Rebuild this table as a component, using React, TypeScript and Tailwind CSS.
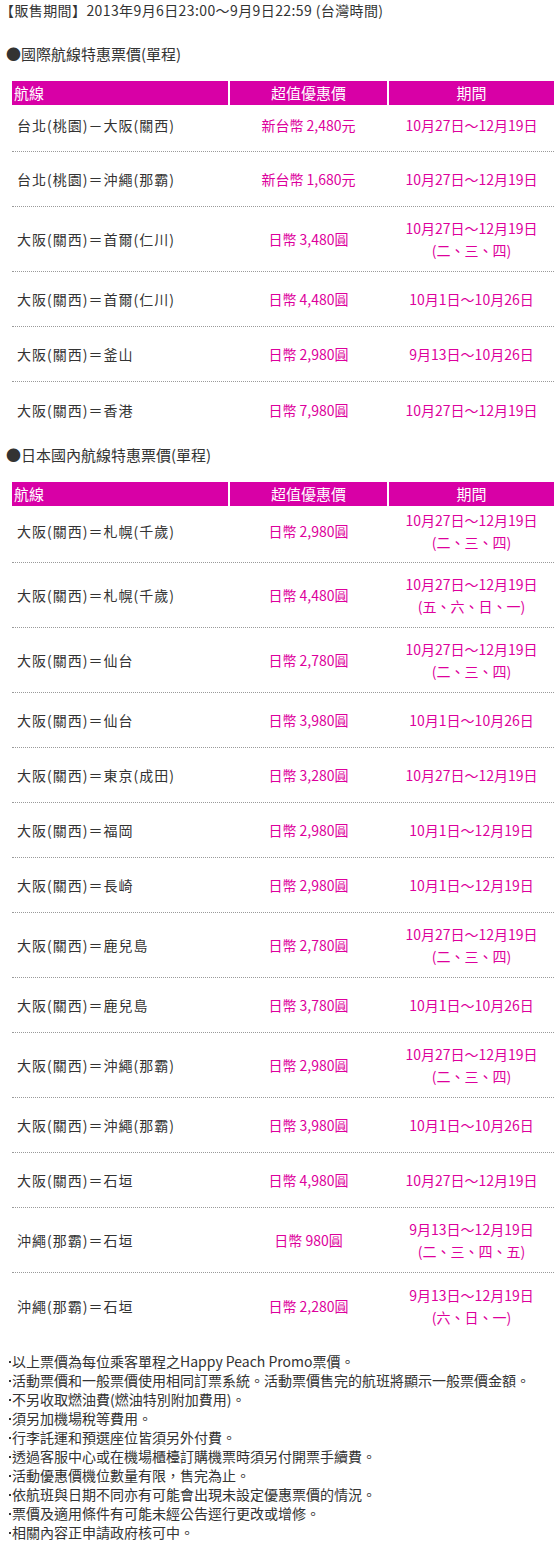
import React from "react";

type Row = {
  route: string;
  price: string;
  period: string;
  days?: string;
};

const intlRows: Row[] = [
  { route: "台北(桃園)－大阪(關西)", price: "新台幣 2,480元", period: "10月27日～12月19日" },
  { route: "台北(桃園)＝沖繩(那霸)", price: "新台幣 1,680元", period: "10月27日～12月19日" },
  { route: "大阪(關西)＝首爾(仁川)", price: "日幣 3,480圓", period: "10月27日～12月19日", days: "(二、三、四)" },
  { route: "大阪(關西)＝首爾(仁川)", price: "日幣 4,480圓", period: "10月1日～10月26日" },
  { route: "大阪(關西)＝釜山", price: "日幣 2,980圓", period: "9月13日～10月26日" },
  { route: "大阪(關西)＝香港", price: "日幣 7,980圓", period: "10月27日～12月19日" },
];

const domesticRows: Row[] = [
  { route: "大阪(關西)＝札幌(千歲)", price: "日幣 2,980圓", period: "10月27日～12月19日", days: "(二、三、四)" },
  { route: "大阪(關西)＝札幌(千歲)", price: "日幣 4,480圓", period: "10月27日～12月19日", days: "(五、六、日、一)" },
  { route: "大阪(關西)＝仙台", price: "日幣 2,780圓", period: "10月27日～12月19日", days: "(二、三、四)" },
  { route: "大阪(關西)＝仙台", price: "日幣 3,980圓", period: "10月1日～10月26日" },
  { route: "大阪(關西)＝東京(成田)", price: "日幣 3,280圓", period: "10月27日～12月19日" },
  { route: "大阪(關西)＝福岡", price: "日幣 2,980圓", period: "10月1日～12月19日" },
  { route: "大阪(關西)＝長崎", price: "日幣 2,980圓", period: "10月1日～12月19日" },
  { route: "大阪(關西)＝鹿兒島", price: "日幣 2,780圓", period: "10月27日～12月19日", days: "(二、三、四)" },
  { route: "大阪(關西)＝鹿兒島", price: "日幣 3,780圓", period: "10月1日～10月26日" },
  { route: "大阪(關西)＝沖繩(那霸)", price: "日幣 2,980圓", period: "10月27日～12月19日", days: "(二、三、四)" },
  { route: "大阪(關西)＝沖繩(那霸)", price: "日幣 3,980圓", period: "10月1日～10月26日" },
  { route: "大阪(關西)＝石垣", price: "日幣 4,980圓", period: "10月27日～12月19日" },
  { route: "沖繩(那霸)＝石垣", price: "日幣 980圓", period: "9月13日～12月19日", days: "(二、三、四、五)" },
  { route: "沖繩(那霸)＝石垣", price: "日幣 2,280圓", period: "9月13日～12月19日", days: "(六、日、一)" },
];

const notes = [
  "以上票價為每位乘客單程之Happy Peach Promo票價。",
  "活動票價和一般票價使用相同訂票系統。活動票價售完的航班將顯示一般票價金額。",
  "不另收取燃油費(燃油特別附加費用)。",
  "須另加機場稅等費用。",
  "行李託運和預選座位皆須另外付費。",
  "透過客服中心或在機場櫃檯訂購機票時須另付開票手續費。",
  "活動優惠價機位數量有限，售完為止。",
  "依航班與日期不同亦有可能會出現未設定優惠票價的情況。",
  "票價及適用條件有可能未經公告逕行更改或增修。",
  "相關內容正申請政府核可中。",
];

function FareTable({ rows }: { rows: Row[] }) {
  return (
    <div className="mx-[12px] w-[542px]">
      {/* header */}
      <div className="grid h-[24px] grid-cols-[216px_157px_165px] gap-[2px] text-[15px] leading-[24px] text-white">
        <div className="bg-[#d800a6] pl-[2px]">航線</div>
        <div className="bg-[#d800a6] text-center">超值優惠價</div>
        <div className="bg-[#d800a6] text-center">期間</div>
      </div>

      {rows.map((row, i) => {
        const first = i === 0;
        const last = i === rows.length - 1;
        const height = row.days
          ? first
            ? "h-[57px] pb-[7px]"
            : "h-[65px]"
          : first
            ? "h-[47px] pb-[7px]"
            : "h-[55px]";
        return (
          <div
            key={i}
            className={`grid grid-cols-[216px_157px_165px] gap-[2px] ${height} ${
              last ? "" : "border-b border-dotted border-[#9a9a9a]"
            }`}
          >
            <div className="flex items-center pl-[5px] tracking-[1px]">{row.route}</div>
            <div className="flex items-center justify-center text-[#dd009c]">{row.price}</div>
            <div className="flex flex-col items-center justify-center leading-[22px] text-[#dd009c]">
              <span>{row.period}</span>
              {row.days && <span>{row.days}</span>}
            </div>
          </div>
        );
      })}
    </div>
  );
}

export default function App() {
  return (
    <div className="w-[560px] bg-white pb-[6px] font-['Noto_Sans_CJK_TC','Noto_Sans_CJK_JP',sans-serif] text-[14px] leading-5 text-[#333333]">
      <p className="h-5 tracking-[0.4px]">【販售期間】2013年9月6日23:00～9月9日22:59 (台灣時間)</p>

      <h2 className="mt-[24px] pl-[6px] text-[15px] leading-5">●國際航線特惠票價(單程)</h2>
      <div className="mt-[17px]">
        <FareTable rows={intlRows} />
      </div>

      <h2 className="mt-[8px] pl-[6px] text-[15px] leading-5">●日本國內航線特惠票價(單程)</h2>
      <div className="mt-[17px]">
        <FareTable rows={domesticRows} />
      </div>

      <ul className="mt-[14px] text-[14px] leading-[19px]">
        {notes.map((n) => (
          <li key={n} className="flex items-center pl-[9px]">
            <span className="mr-[1px] inline-block h-[2px] w-[2px] shrink-0 bg-[#333333]" />
            <span>{n}</span>
          </li>
        ))}
      </ul>
    </div>
  );
}
